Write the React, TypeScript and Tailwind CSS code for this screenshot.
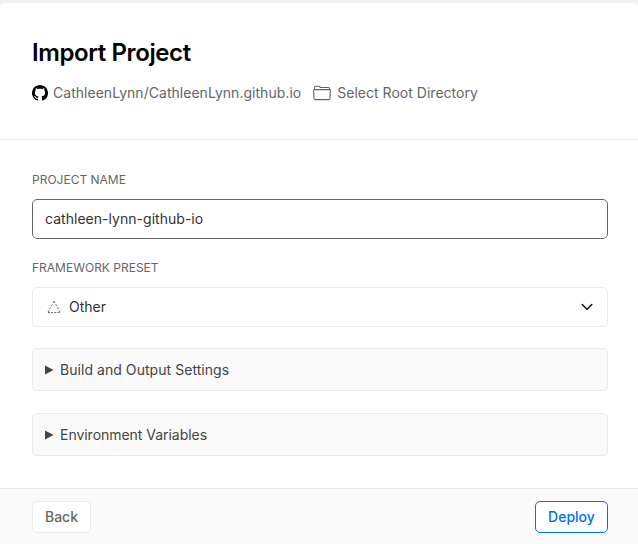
import React, { useState } from "react";

function GithubIcon() {
  return (
    <svg width="16" height="16" viewBox="0 0 16 16" fill="#000" className="shrink-0">
      <path d="M8 0C3.58 0 0 3.58 0 8c0 3.54 2.29 6.53 5.47 7.59.4.07.55-.17.55-.38 0-.19-.01-.82-.01-1.49-2.01.37-2.53-.49-2.69-.94-.09-.23-.48-.94-.82-1.13-.28-.15-.68-.52-.01-.53.63-.01 1.08.58 1.23.82.72 1.21 1.87.87 2.33.66.07-.52.28-.87.51-1.07-1.78-.2-3.64-.89-3.64-3.95 0-.87.31-1.59.82-2.15-.08-.2-.36-1.02.08-2.12 0 0 .67-.21 2.2.82.64-.18 1.32-.27 2-.27s1.36.09 2 .27c1.53-1.04 2.2-.82 2.2-.82.44 1.1.16 1.92.08 2.12.51.56.82 1.27.82 2.15 0 3.07-1.87 3.75-3.65 3.95.29.25.54.73.54 1.48 0 1.07-.01 1.93-.01 2.2 0 .21.15.46.55.38A8.01 8.01 0 0 0 16 8c0-4.42-3.58-8-8-8z" />
    </svg>
  );
}

function FolderIcon() {
  return (
    <svg width="18" height="16" viewBox="0 0 18 16" fill="none" stroke="#666" strokeWidth="1.1" strokeLinejoin="round" className="shrink-0">
      <path d="M1.5 4.7V2.2Q1.5 1.2 2.5 1.2H6.2L7.5 2.5H15.5Q16.5 2.5 16.5 3.5V4.7" />
      <path d="M1.4 4.6H16.6Q17.5 4.6 17.4 5.5L16.9 13.7Q16.8 14.6 15.9 14.6H2.1Q1.2 14.6 1.1 13.7L.6 5.5Q.5 4.6 1.4 4.6Z" />
    </svg>
  );
}

function OtherIcon() {
  return (
    <svg width="14" height="14" viewBox="0 0 14 14" fill="none" stroke="#666" strokeWidth="1" className="shrink-0">
      <path d="M7 1.2L.8 12.5" strokeDasharray="2 1.5" />
      <path d="M7 1.2L13.2 12.5" strokeDasharray="2 1.5" />
      <path d="M1 12.5H13" strokeDasharray="2 1.2" />
    </svg>
  );
}

function Disclosure({ title, tracking }: { title: string; tracking: string }) {
  return (
    <button className="flex h-[43px] w-full items-center rounded-[5px] border border-[#eaeaea] bg-[#fafafa] pl-3 text-left text-[14px] text-[#444]">
      <svg width="9" height="10" viewBox="0 0 9 10" className="mr-1.5 mt-px" fill="#444">
        <path d="M0 .5L8.5 5L0 9.5Z" />
      </svg>
      <span className={tracking}>{title}</span>
    </button>
  );
}

export default function App() {
  const [name, setName] = useState("cathleen-lynn-github-io");
  return (
    <div className="h-[544px] w-[638px] overflow-hidden bg-[#f2f2f2] pt-[3px] font-['Inter','Liberation_Sans',sans-serif]">
      <main className="flex h-[541px] flex-col overflow-hidden rounded-t-[5px] bg-white">
        <header className="h-[137px] border-b border-[#eaeaea] px-8 pt-[34px]">
          <h1 className="text-[24px] font-semibold leading-8 tracking-[-0.4px] text-black">Import Project</h1>
          <div className="mt-[14px] flex h-5 items-center text-[14px] text-[#666]">
            <GithubIcon />
            <span className="ml-[5px] pb-0.5 tracking-[0.03px]">CathleenLynn/CathleenLynn.github.io</span>
            <span className="ml-3 flex items-center gap-1.5">
              <FolderIcon />
              <span className="pb-0.5 tracking-[0.02px]">Select Root Directory</span>
            </span>
          </div>
        </header>

        <section className="flex-1 px-8 pr-[30px] pt-8">
          <label htmlFor="project" className="block h-[27px] text-[12px] leading-4 text-[#666]">PROJECT NAME</label>
          <input
            id="project"
            value={name}
            onChange={(e) => setName(e.target.value)}
            className="block h-10 w-full rounded-[5px] border border-[#666] px-3 pb-0.5 text-[14px] tracking-[0.03px] text-[#333] outline-none"
          />
          <div className="mt-[21px] h-[27px] text-[12px] leading-4 text-[#666]">FRAMEWORK PRESET</div>
          <button className="flex h-10 w-full items-center rounded-[5px] border border-[#eaeaea] px-[14px] text-[14px] text-[#333]">
            <OtherIcon />
            <span className="ml-2 pb-0.5">Other</span>
            <svg width="12" height="8" viewBox="0 0 12 8" fill="none" stroke="#111" strokeWidth="1.5" strokeLinecap="round" strokeLinejoin="round" className="ml-auto">
              <path d="M1.2 1.5L6 6.2L10.8 1.5" />
            </svg>
          </button>
          <div className="mt-[21px] flex flex-col gap-[22px]">
            <Disclosure title="Build and Output Settings" tracking="tracking-[0.05px]" />
            <Disclosure title="Environment Variables" tracking="tracking-[-0.03px]" />
          </div>
        </section>

        <footer className="flex h-14 items-start justify-between border-t border-[#eaeaea] bg-[#fafafa] pl-8 pr-[30px] pt-3 text-[14px] font-medium">
          <button className="h-8 w-[59px] rounded-[5px] border border-[#eaeaea] bg-white pb-0.5 text-[#666]">Back</button>
          <button className="h-8 w-[73px] rounded-[5px] border border-[#0070f3] bg-white pb-0.5 text-[#0070f3]">Deploy</button>
        </footer>
      </main>
    </div>
  );
}
